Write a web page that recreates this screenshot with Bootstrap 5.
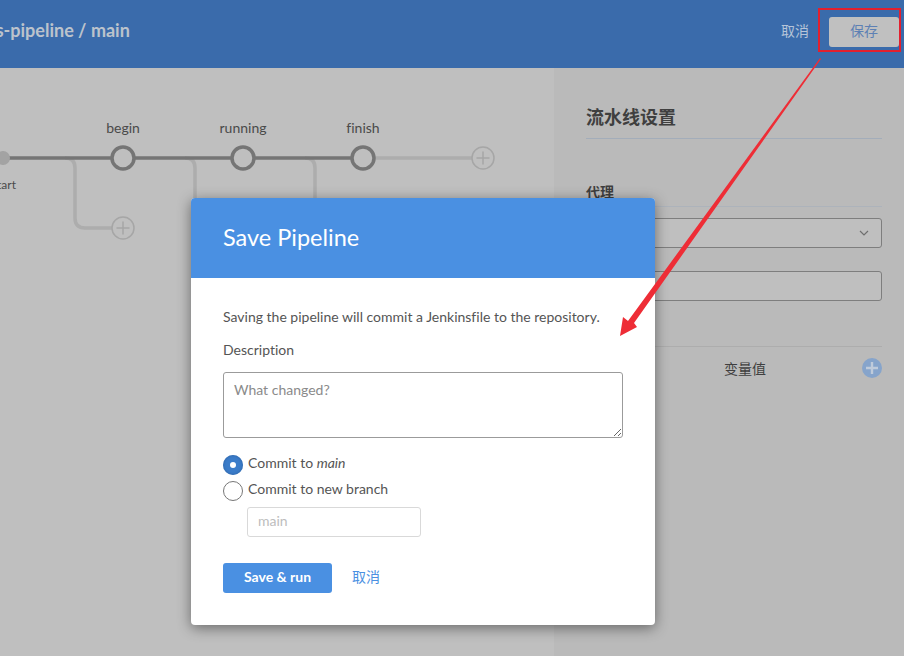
<!DOCTYPE html>
<html lang="en">
<head>
    <meta charset="UTF-8">
    <meta name="viewport" content="width=device-width, initial-scale=1.0">
    <title>Save Pipeline</title>
    <link href="https://cdn.jsdelivr.net/npm/bootstrap@5.3.0/dist/css/bootstrap.min.css" rel="stylesheet">
    <style>
        html, body { height: 656px; overflow: hidden; }
        body { font-family: Lato, "Noto Sans CJK SC", sans-serif; font-size: 14px; color: #4a4a4a; background: #bfbfbf; position: relative; font-variant-ligatures: none; }

        /* page behind the dialog, already dimmed */
        .top-bar { height: 68px; background: #3a6bab; padding: 17px 5px 0 0; }
        .pipeline-name { font-size: 18px; font-weight: 700; color: #bcc3cc; margin-left: -53px; line-height: 26px; }
        .top-cancel { color: #b6c4d8; margin: 0 20px 4px 0; }
        .top-save { width: 70px; height: 30px; padding: 0 0 4px; background: #c0c0c0; border: 0; border-radius: 3px; color: #5d80b4; font-size: 14px; }
        .main-area { height: 588px; }
        .graph-area { width: 554px; background: #bfbfbf; }
        .graph-area svg { display: block; }
        .graph-area text { font-family: Lato, sans-serif; fill: #4a4a4a; }
        .settings { flex: 1; background: #bababa; padding: 34px 22px 0 32px; }
        .settings h2 { font-size: 18px; font-weight: 700; line-height: 30px; margin: 0; padding-bottom: 6px; border-bottom: 1px solid #a3adba; color: #3f3f3f; }
        .agent-label { font-weight: 700; font-size: 14px; line-height: 20px; margin-top: 43px; padding-bottom: 4px; border-bottom: 1px solid #adb3bb; color: #3f3f3f; }
        .fake-field { height: 30px; border: 1px solid #7e7e7e; border-radius: 3px; background: #bfbfbf; }
        .fake-select { margin-top: 11px; padding-right: 12px; }
        .fake-input { margin-top: 23px; }
        .vars-head { margin-top: 45px; border-top: 1px solid #adadad; padding-top: 11px; height: 34px; }
        .vars-head span { margin-left: 138px; line-height: 22px; color: #3f3f3f; }

        /* dialog */
        .save-dialog { position: absolute; left: 191px; top: 198px; width: 464px; height: 427px; background: #fff; border: 0; border-radius: 4px; box-shadow: 0 3px 14px rgba(0,0,0,.45); overflow: hidden; }
        .save-dialog .modal-header { height: 80px; background: #4a90e2; color: #fff; padding: 0 32px 3px; border: 0; border-radius: 0; }
        .save-dialog .modal-title { font-size: 23.5px; font-weight: 400; line-height: 30px; }
        .save-dialog .modal-body { padding: 29px 32px 0; color: #555; }
        .save-dialog p { line-height: 20px; margin-bottom: 13px; }
        .desc-label { line-height: 20px; margin-bottom: 12px; display: block; }
        .save-dialog textarea { width: 400px; height: 66px; border: 1px solid #9b9b9b; border-radius: 3px; padding: 6px 10px; font-size: 14px; color: #555; margin-bottom: 15px; }
        .save-dialog textarea::placeholder { color: #8a8a8a; }
        .radio-row { height: 26px; display: flex; gap: 5px; line-height: 20px; }
        .radio-dot { width: 20px; height: 20px; border-radius: 50%; border: 1px solid #777; background: #fff; flex: none; margin-top: 2px; }
        .radio-dot.on { border: 0; background: #3b7cc9; box-shadow: inset 0 0 3px #2a5f9f; display: flex; align-items: center; justify-content: center; }
        .radio-dot.on::after { content: ""; width: 6px; height: 6px; border-radius: 50%; background: #fff; }
        .branch-input { width: 174px; height: 30px; margin: 2px 0 0 24px; border: 1px solid #d9d9d9; border-radius: 3px; padding: 0 10px 3px; font-size: 14px; display: block; }
        .branch-input::placeholder { color: #bdbdbd; }
        .dialog-actions { margin-top: 26px; gap: 20px; }
        .btn-run { width: 109px; height: 30px; padding: 0 0 3px; background: #4a90e2; border: 0; border-radius: 3px; color: #fff; font-size: 14px; font-weight: 700; }
        .cancel-link { color: #4a90e2; text-decoration: none; margin-bottom: 4px; }

        /* red annotation laid over the screenshot */
        .mark-box { position: absolute; left: 818px; top: 8px; width: 83px; height: 44px; border: 2px solid #e3202e; }
        .mark-arrow { position: absolute; left: 0; top: 0; pointer-events: none; }
    </style>
</head>
<body>
    <div class="top-bar d-flex justify-content-between">
        <div class="pipeline-name text-nowrap">jenkins-pipeline / main</div>
        <div class="d-flex align-items-center align-self-start">
            <span class="top-cancel">取消</span>
            <button type="button" class="top-save">保存</button>
        </div>
    </div>

    <div class="main-area d-flex">
        <div class="graph-area">
            <svg width="554" height="588" viewBox="0 68 554 588" fill="none">
                <!-- branch stubs -->
                <path d="M65 158q10 0 10 10v50q0 10 10 10h27" stroke="#adadad" stroke-width="3.5"/>
                <path d="M185 158q10 0 10 10v40" stroke="#adadad" stroke-width="3.5"/>
                <path d="M305 158q10 0 10 10v40" stroke="#adadad" stroke-width="3.5"/>
                <path d="M375 158h97" stroke="#adadad" stroke-width="3.5"/>
                <path d="M3 158h350" stroke="#757575" stroke-width="3.5"/>
                <circle cx="3" cy="158" r="7" fill="#a3a3a3"/>
                <circle cx="123" cy="158" r="11" fill="#bfbfbf" stroke="#757575" stroke-width="3.5"/>
                <circle cx="243" cy="158" r="11" fill="#bfbfbf" stroke="#757575" stroke-width="3.5"/>
                <circle cx="363" cy="158" r="11" fill="#bfbfbf" stroke="#757575" stroke-width="3.5"/>
                <!-- add buttons -->
                <circle cx="483" cy="158" r="11" fill="#bfbfbf" stroke="#a6a6a6" stroke-width="1.5"/>
                <path d="M483 151.500v13M476.500 158h13" stroke="#a6a6a6" stroke-width="1.500"/>
                <circle cx="123" cy="228" r="11" fill="#bfbfbf" stroke="#a6a6a6" stroke-width="1.5"/>
                <path d="M123 221.500v13M116.500 228h13" stroke="#a6a6a6" stroke-width="1.500"/>
                <text x="123" y="133" text-anchor="middle" font-size="14">begin</text>
                <text x="243" y="133" text-anchor="middle" font-size="14">running</text>
                <text x="363" y="133" text-anchor="middle" font-size="14">finish</text>
                <text x="16" y="189" text-anchor="end" font-size="12">start</text>
            </svg>
        </div>
        <div class="settings">
            <h2>流水线设置</h2>
            <div class="agent-label">代理</div>
            <div class="fake-field fake-select d-flex align-items-center justify-content-end">
                <svg width="10" height="6" viewBox="0 0 10 6" fill="none"><path d="M1 1l4 4 4-4" stroke="#6f6f6f" stroke-width="1.200"/></svg>
            </div>
            <div class="fake-field fake-input"></div>
            <div class="vars-head d-flex justify-content-between align-items-start">
                <span>变量值</span>
                <svg width="20" height="20" viewBox="0 0 20 20"><circle cx="10" cy="10" r="10" fill="#86a4cb"/><path d="M10 4v12M4 10h12" stroke="#bfcbdb" stroke-width="2.400"/></svg>
            </div>
        </div>
    </div>

    <div class="modal-content save-dialog">
        <div class="modal-header">
            <h1 class="modal-title">Save Pipeline</h1>
        </div>
        <div class="modal-body">
            <p>Saving the pipeline will commit a Jenkinsfile to the repository.</p>
            <label class="desc-label">Description</label>
            <textarea class="d-block" placeholder="What changed?"></textarea>
            <div class="radio-row"><span class="radio-dot on"></span><span>Commit to <em>main</em></span></div>
            <div class="radio-row"><span class="radio-dot"></span><span>Commit to new branch</span></div>
            <input class="branch-input" type="text" placeholder="main">
            <div class="dialog-actions d-flex align-items-center">
                <button type="button" class="btn-run">Save &amp; run</button>
                <a href="#" class="cancel-link">取消</a>
            </div>
        </div>
    </div>

    <div class="mark-box"></div>
    <svg class="mark-arrow" width="904" height="656" viewBox="0 0 904 656">
        <polygon points="820,58 821,59 634,323 637,327 620,336 623,317 628,321" fill="#ee2d36"/>
    </svg>

    <script src="https://cdn.jsdelivr.net/npm/bootstrap@5.3.0/dist/js/bootstrap.bundle.min.js"></script>
</body>
</html>
